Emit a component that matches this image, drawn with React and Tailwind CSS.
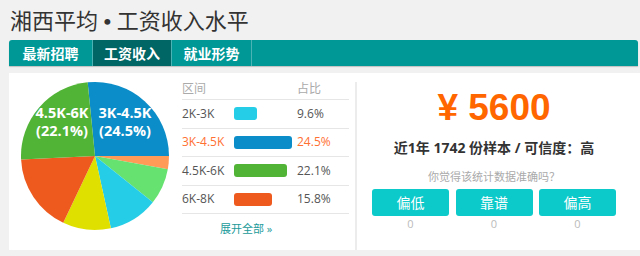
import React from "react";

const slices = [
  { from: -5.7, to: 90, color: "#0a8dc8" },
  { from: 90, to: 100.3, color: "#ff9a57" },
  { from: 100.3, to: 128.6, color: "#66e270" },
  { from: 128.6, to: 167.6, color: "#26cde6" },
  { from: 167.6, to: 205.4, color: "#dfe000" },
  { from: 205.4, to: 267.2, color: "#ee5a1e" },
  { from: 267.2, to: 354.3, color: "#52b436" },
];

const rows = [
  { label: "2K-3K", pct: "9.6%", w: 23, color: "bg-[#26cde6]" },
  { label: "3K-4.5K", pct: "24.5%", w: 58, color: "bg-[#0a8dc8]", hot: true },
  { label: "4.5K-6K", pct: "22.1%", w: 53, color: "bg-[#52b436]" },
  { label: "6K-8K", pct: "15.8%", w: 38, color: "bg-[#ee5a1e]" },
];

function slicePath(cx, cy, r, a0, a1) {
  const p = (a) => {
    const rad = (a * Math.PI) / 180;
    return [cx + r * Math.sin(rad), cy - r * Math.cos(rad)];
  };
  const [x0, y0] = p(a0);
  const [x1, y1] = p(a1);
  const large = a1 - a0 > 180 ? 1 : 0;
  return `M${cx},${cy} L${x0},${y0} A${r},${r} 0 ${large} 1 ${x1},${y1} Z`;
}

function Pie() {
  return (
    <svg width="150" height="150" viewBox="0 0 150 150">
      {slices.map((s, i) => (
        <path key={i} d={slicePath(75, 75, 74, s.from, s.to)} fill={s.color} />
      ))}
      <g fill="#fff" fontFamily="'Open Sans', sans-serif" fontWeight="700" fontSize="14.5" textAnchor="middle">
        <text x="105" y="37">3K-4.5K</text>
        <text x="105" y="55">(24.5%)</text>
        <text x="42" y="37">4.5K-6K</text>
        <text x="42" y="55">(22.1%)</text>
      </g>
    </svg>
  );
}

export default function App() {
  return (
    <div className="w-[640px] h-[256px] bg-[#f1f1f1] overflow-hidden font-['Open_Sans','Noto_Sans_CJK_SC',sans-serif]">
      <h1 className="h-[40px] pl-[10px] pt-[5px] text-[22px] leading-[28px] text-[#333] font-['Noto_Sans_CJK_SC',serif]">
        湘西平均<span className="font-['Liberation_Serif',serif] font-bold"> • </span>工资收入水平
      </h1>

      <div className="ml-[9px] mr-[2px] h-[26px] flex bg-[#009797] rounded-t-[3px] shadow-[0_1px_1px_rgba(0,0,0,0.2)] text-white font-bold text-[14px] font-['Noto_Sans_CJK_SC',serif]">
        <div className="w-[84px] flex items-center justify-center border-r border-[#4bb3b3]">最新招聘</div>
        <div className="w-[79px] flex items-center justify-center bg-[#006565] border-r border-[#4bb3b3]">工资收入</div>
        <div className="w-[80px] flex items-center justify-center border-r border-[#4bb3b3]">就业形势</div>
      </div>

      <div className="mt-[7px] ml-[9px] h-[177px] bg-white flex">
        <div className="w-[173px] pl-[11px] pt-[8px] shrink-0">
          <Pie />
        </div>

        <div className="w-[167px] shrink-0 pt-[5px]">
          <div className="flex h-[22px] items-center text-[12px] text-[#aaa] border-b border-[#e6e6e6]">
            <span className="w-[115px]">区间</span>
            <span>占比</span>
          </div>
          {rows.map((r) => (
            <div
              key={r.label}
              className={`flex h-[28.5px] items-center text-[12px] border-b border-[#e6e6e6] ${r.hot ? "text-[#ff7033]" : "text-[#555]"}`}
            >
              <span className="w-[52px]">{r.label}</span>
              <span className="w-[63px]">
                <span className={`block h-[13px] rounded-[3px] ${r.color}`} style={{ width: r.w }} />
              </span>
              <span>{r.pct}</span>
            </div>
          ))}
          <div className="pl-[38px] pt-[7px] text-[11px] text-[#1a9a9a]">展开全部 »</div>
        </div>

        <div className="w-[2px] ml-[6px] mt-[9px] bg-[#ececec] shrink-0" />

        <div className="w-[274px] flex flex-col items-center pt-[15px]">
          <div className="text-[37px] leading-[40px] font-bold text-[#ff6600] font-['Liberation_Sans',sans-serif]">
            ¥ 5600
          </div>
          <div className="mt-[10px] text-[14px] leading-[20px] font-bold text-[#333]">
            近1年 1742 份样本 / 可信度：高
          </div>
          <div className="mt-[11px] text-[11px] leading-[16px] text-[#aaa]">你觉得该统计数据准确吗？</div>
          <div className="mt-[4px] flex gap-[6.5px]">
            {["偏低", "靠谱", "偏高"].map((t) => (
              <div key={t} className="w-[77px] flex flex-col items-center">
                <div className="w-full h-[27px] rounded-[3px] bg-[#0ccaca] text-white text-[14px] flex items-center justify-center">
                  {t}
                </div>
                <div className="mt-[1px] text-[11px] leading-[14px] text-[#bbb]">0</div>
              </div>
            ))}
          </div>
        </div>
      </div>
    </div>
  );
}
